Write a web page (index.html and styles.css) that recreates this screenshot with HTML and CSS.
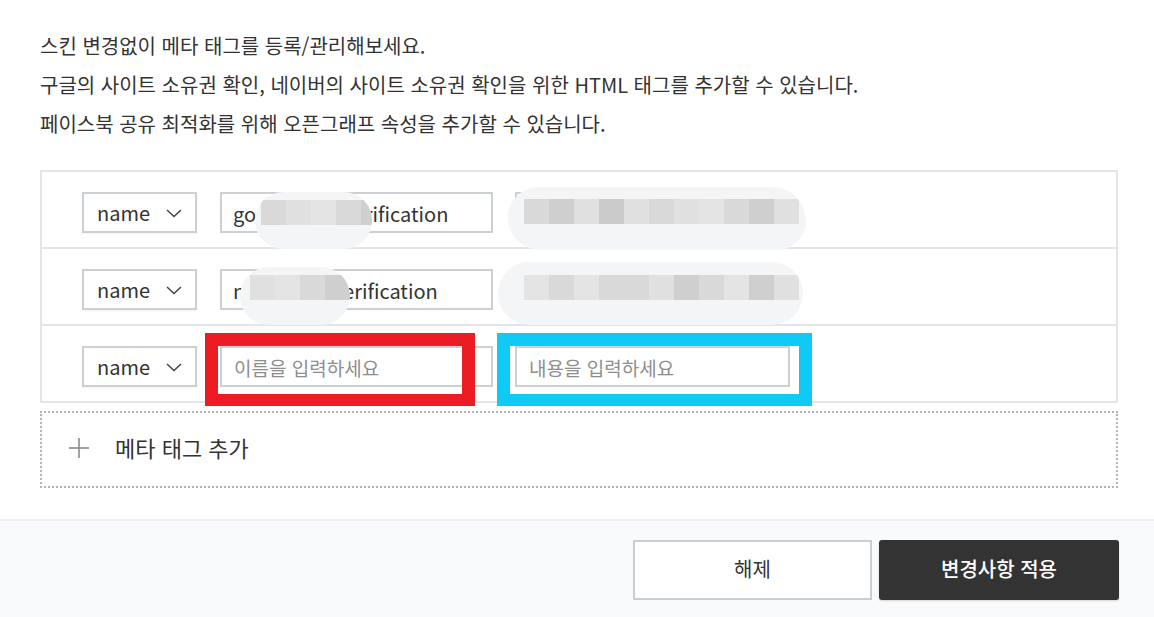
FILE: index.html
```html
<!DOCTYPE html>
<html lang="ko">
<head>
<meta charset="utf-8">
<title>메타 태그</title>
<link rel="stylesheet" href="styles.css">
</head>
<body>
<div class="page">
  <div class="content">
    <div class="desc">
      <p>스킨 변경없이 메타 태그를 등록/관리해보세요.</p>
      <p>구글의 사이트 소유권 확인, 네이버의 사이트 소유권 확인을 위한 HTML 태그를 추가할 수 있습니다.</p>
      <p>페이스북 공유 최적화를 위해 오픈그래프 속성을 추가할 수 있습니다.</p>
    </div>

    <div class="table">
      <div class="row">
        <div class="select"><span>name</span><svg class="chev" viewBox="0 0 16 9" width="16" height="9"><polyline points="1,1 8,7.5 15,1"/></svg></div>
        <div class="field name">google-site-verification</div>
        <div class="field value"></div>
      </div>
      <div class="row">
        <div class="select"><span>name</span><svg class="chev" viewBox="0 0 16 9" width="16" height="9"><polyline points="1,1 8,7.5 15,1"/></svg></div>
        <div class="field name">naver-site-verification</div>
        <div class="field value"></div>
      </div>
      <div class="row">
        <div class="select"><span>name</span><svg class="chev" viewBox="0 0 16 9" width="16" height="9"><polyline points="1,1 8,7.5 15,1"/></svg></div>
        <div class="field name ph">이름을 입력하세요</div>
        <div class="field value ph">내용을 입력하세요</div>
      </div>
    </div>

    <div class="add">
      <svg class="plus" viewBox="0 0 22 22" width="22" height="22"><line x1="11" y1="1" x2="11" y2="21"/><line x1="1" y1="11" x2="21" y2="11"/></svg>
      <span>메타 태그 추가</span>
    </div>
  </div>

  <div class="footer">
    <button class="btn">해제</button>
    <button class="btn primary">변경사항 적용</button>
  </div>

  <!-- blurred (redacted) regions -->
  <div class="blob b1"><div class="strip"><i class="s2"></i><i class="s1"></i><i class="s3"></i><i class="s2"></i><i class="s4"></i></div></div>
  <div class="blob b2"><div class="strip"><i class="s1"></i><i class="s3"></i><i class="s2"></i><i class="s4"></i></div></div>
  <div class="blob b3"><div class="strip"><i class="s2"></i><i class="s4"></i><i class="s1"></i><i class="s5"></i><i class="s1"></i><i class="s2"></i><i class="s1"></i><i class="s3"></i><i class="s2"></i><i class="s4"></i><i class="s1"></i></div></div>
  <div class="blob b4"><div class="strip"><i class="s3"></i><i class="s2"></i><i class="s3"></i><i class="s2"></i><i class="s2"></i><i class="s1"></i><i class="s4"></i><i class="s2"></i><i class="s3"></i><i class="s4"></i><i class="s1"></i></div></div>

  <!-- annotation boxes -->
  <div class="mark red"></div>
  <div class="mark blue"></div>
</div>
</body>
</html>
```

FILE: styles.css
```css
* { box-sizing: border-box; }
html, body { margin: 0; padding: 0; background: #fff; }
body {
  font-family: "Noto Sans CJK KR", "Noto Sans", sans-serif;
  color: #333;
  width: 1154px;
  height: 617px;
  overflow: hidden;
}
.page { position: relative; width: 1154px; height: 617px; }

.content { padding: 26px 36px 31px 40px; }

.desc p {
  margin: 0;
  font-size: 20px;
  line-height: 39px;
  color: #333;
  white-space: nowrap;
}

.table {
  margin-top: 27px;
  border: 2px solid #e2e5e9;
}
.row {
  display: flex;
  align-items: center;
  padding: 20px 0 14px 40px;
}
.row + .row { border-top: 2px solid #e2e5e9; }

.select {
  width: 115px;
  height: 41px;
  border: 2px solid #cbd0d5;
  box-shadow: 0 1px 2px rgba(0,0,0,0.06);
  display: flex;
  align-items: center;
  justify-content: space-between;
  padding: 0 13px 0 13px;
  font-size: 20px;
  color: #333;
}
.select span { line-height: 1; padding-top: 1px; }
.chev { fill: none; stroke: #444; stroke-width: 1.5; margin-top: 2px; }

.field {
  height: 41px;
  border: 2px solid #cbd0d5;
  display: flex;
  align-items: center;
  padding: 1px 11px 0;
  font-size: 20px;
  color: #333;
  white-space: nowrap;
  overflow: hidden;
  background: #fff;
}
.field.name { width: 273px; margin-left: 23px; }
.field.value { width: 275px; margin-left: 22px; }
.field.ph { color: #8e8e8e; font-size: 19px; padding-left: 12px; }

.add {
  margin-top: 8px;
  height: 77px;
  border: 2px dotted #b4b4b4;
  display: flex;
  align-items: center;
  padding: 0 0 6px 26px;
  gap: 25px;
  font-size: 22px;
  color: #333;
}
.plus { stroke: #8a8a8a; stroke-width: 1.6; margin-top: 2px; }

.footer {
  border-top: 2px solid #eef0f3;
  background: #f9fafc;
  height: 99px;
  display: flex;
  justify-content: flex-end;
  align-items: flex-start;
  gap: 7px;
  padding: 19px 35px 0 0;
}
.btn {
  font-family: "Noto Sans CJK KR", "Noto Sans", sans-serif;
  font-size: 20px;
  height: 60px;
  width: 239px;
  border: 2px solid #c9ced4;
  background: #fff;
  color: #333;
  padding: 0 0 3px;
  cursor: pointer;
}
.btn.primary {
  width: 240px;
  border: none;
  background: #333;
  color: #fff;
  border-radius: 3px;
  font-weight: 500;
  box-shadow: 0 1px 2px rgba(0,0,0,0.15);
}

/* redaction blobs */
.blob {
  position: absolute;
  background: #f4f5f7;
  border-radius: 30px;
  overflow: hidden;
}
.blob .strip { position: absolute; display: flex; height: 25px; }
.blob .strip i { display: block; width: 25px; height: 25px; }
.s1 { background: #e0e0e0; }
.s2 { background: #d9d9d9; }
.s3 { background: #e4e4e4; }
.s4 { background: #cfcfcf; }
.s5 { background: #cbcbcb; }

.b1 { left: 255px; top: 192px; width: 117px; height: 57px; }
.b1 .strip { left: 6px; top: 8px; }
.b2 { left: 240px; top: 267px; width: 110px; height: 58px; }
.b2 .strip { left: 10px; top: 8px; }
.b3 { left: 508px; top: 187px; width: 298px; height: 63px; border-radius: 32px 36px 30px 34px; }
.b3 .strip { left: 16px; top: 12px; }
.b4 { left: 498px; top: 262px; width: 305px; height: 63px; border-radius: 34px; }
.b4 .strip { left: 26px; top: 13px; }

/* annotation marks */
.mark { position: absolute; top: 333px; height: 73px; }
.mark.red { left: 205px; width: 270px; border: 13px solid #ec1c24; border-bottom-width: 12px; }
.mark.blue { left: 497px; width: 315px; border: 13px solid #0fcaf5; border-bottom-width: 12px; }
```
